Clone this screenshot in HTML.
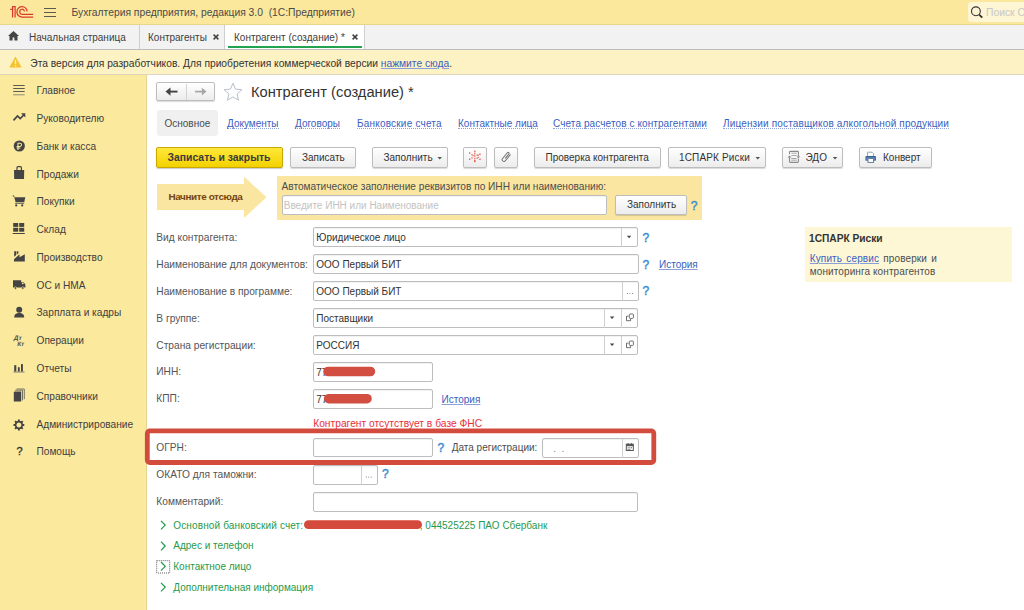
<!DOCTYPE html>
<html><head><meta charset="utf-8">
<style>
*{box-sizing:border-box;margin:0;padding:0}
html,body{width:1024px;height:610px;overflow:hidden;background:#fff;font-family:"Liberation Sans",sans-serif;font-size:10px;color:#333}
.a{position:absolute;white-space:nowrap}
#top{position:absolute;left:0;top:0;width:1024px;height:25px;background:#fbe89c;border-bottom:1px solid #e8d68a}
#tabs{position:absolute;left:0;top:25px;width:1024px;height:25px;background:#f2f2f2;border-bottom:1px solid #bdbdbd}
#warn{position:absolute;left:0;top:50px;width:1024px;height:25px;background:#fdf2c4;border-bottom:1px solid #dcd6c0}
#side{position:absolute;left:0;top:75px;width:147px;height:535px;background:#fbe99e;border-right:1px solid #e6d590}
.lnk{color:#3a60c0;text-decoration:underline;text-decoration-color:#8aa0d8}
.dl{color:#3a60c0;display:inline-block;line-height:11px;height:11px;border-bottom:1px dotted #8ea4dc}
.btn{position:absolute;height:20px;border:1px solid #bdbdbd;border-radius:2px;background:linear-gradient(#fff,#ececec);box-shadow:0 1px 1px rgba(0,0,0,.15);color:#333;text-align:center;line-height:18px;white-space:nowrap}
.inp{position:absolute;height:20px;border:1px solid #bdbdbd;border-radius:2px;background:#fff;box-shadow:inset 0 1px 1px rgba(0,0,0,.06);color:#333;line-height:19px;padding-left:2px;white-space:nowrap}
.lbl{position:absolute;left:156.3px;white-space:nowrap;color:#555;font-size:10.2px}
.q{position:absolute;color:#3b8bd0;font-weight:normal;font-size:12px;-webkit-text-stroke:0.45px #3b8bd0}
.grn{color:#1f9a4c}
</style></head><body>
<div id="top">
<svg class="a" style="left:0;top:0" width="40" height="24" viewBox="0 0 40 24">
<g fill="none" stroke="#dc3a2c" stroke-width="1.25">
<path d="M10.2 9.4 H12.6 M12.6 17.4 V6.7 H15.1 V17.4"/>
<path d="M27.1 11.6 A5.1 5.3 0 1 0 22.4 17.1 H33.2"/>
<path d="M24.5 11.4 A2.4 2.6 0 1 0 22.4 14.4 H33.2"/>
</g></svg>
<div class="a" style="left:44px;top:8px;width:12px;height:1.4px;background:#5a5a52"></div>
<div class="a" style="left:44px;top:12px;width:12px;height:1.4px;background:#5a5a52"></div>
<div class="a" style="left:44px;top:16px;width:12px;height:1.4px;background:#5a5a52"></div>
<div class="a" style="left:71.5px;top:7px;font-size:10.3px;color:#4a4a4a">Бухгалтерия предприятия, редакция 3.0&nbsp; (1С:Предприятие)</div>
<div class="a" style="left:968px;top:2px;width:60px;height:20px;background:#fdf5d3;border-radius:3px"></div>
<svg class="a" style="left:970px;top:5px" width="14" height="14" viewBox="0 0 14 14"><circle cx="5.9" cy="6.3" r="4.4" fill="none" stroke="#333" stroke-width="1.1"/><path d="M9.1 9.6 L12.3 12.6" stroke="#333" stroke-width="1.9"/></svg>
<div class="a" style="left:986px;top:7px;font-size:10.3px;color:#c8c8c8">Поиск Се</div>
</div>
<div id="tabs">
<svg class="a" style="left:8.3px;top:5.9px" width="11" height="10" viewBox="0 0 11 10"><path d="M5.5 0 L11 5 H9.5 V9.5 H6.4 V6.5 H4.6 V9.5 H1.5 V5 H0 Z" fill="#444"/></svg>
<div class="a" style="left:29px;top:7px;color:#404040">Начальная страница</div>
<div class="a" style="left:139px;top:0;width:1px;height:24px;background:#cfcfcf"></div>
<div class="a" style="left:148px;top:7px;color:#404040">Контрагенты</div>
<svg class="a" style="left:212.5px;top:9.3px" width="6" height="6" viewBox="0 0 6 6"><path d="M0.6 0.6 L5.4 5.4 M5.4 0.6 L0.6 5.4" stroke="#444" stroke-width="1.5"/></svg>
<div class="a" style="left:224px;top:0;width:1px;height:24px;background:#cfcfcf"></div>
<div class="a" style="left:225px;top:0;width:140px;height:24px;background:#fff;border-right:1px solid #cfcfcf"></div>
<div class="a" style="left:234px;top:7px;color:#404040">Контрагент (создание) *</div>
<svg class="a" style="left:352.3px;top:9.3px" width="6" height="6" viewBox="0 0 6 6"><path d="M0.6 0.6 L5.4 5.4 M5.4 0.6 L0.6 5.4" stroke="#444" stroke-width="1.5"/></svg>
<div class="a" style="left:228px;top:21px;width:134px;height:2px;background:#21a34f"></div>
</div>
<div id="warn">
<svg class="a" style="left:9px;top:6px" width="13" height="12" viewBox="0 0 13 12"><path d="M6.5 0.5 L12.7 11.5 H0.3 Z" fill="#f5c32c"/><rect x="5.8" y="4" width="1.4" height="4" fill="#fdf0c4"/><rect x="5.8" y="9" width="1.4" height="1.4" fill="#fdf0c4"/></svg>
<div class="a" style="left:30.3px;top:8px;color:#333;font-size:10.26px">Эта версия для разработчиков. Для приобретения коммерческой версии <span class="lnk">нажмите сюда</span>.</div>
</div>
<div id="side"></div>
<svg class="a" style="left:0;top:0" width="40" height="610" viewBox="0 0 40 610"><path d="M13.2 85.5h11.5M13.2 88.5h11.5M13.2 91.5h11.5" stroke="#5a5a55" stroke-width="1"/><path d="M13.2 94.8h11.5" stroke="#8f8b72" stroke-width="1"/><path d="M13.5 120.3 L17.5 116 L20.2 118.6 L23.8 115" fill="none" stroke="#444" stroke-width="1.7"/><path d="M21 113.2 H25.3 V117.5 Z" fill="#444"/><circle cx="19.3" cy="146" r="5.6" fill="#444"/><path d="M18 150 V143.3 H20 A1.55 1.55 0 0 1 20 146.4 H16.6 M16.6 148 H20.4" fill="none" stroke="#fbe99e" stroke-width="1.05"/><path d="M14 170 H24.2 L24 179 H14.2 Z" fill="#444"/><path d="M17 170.5 V167.6 Q17 166.6 18 166.6 H20.4 Q21.4 166.6 21.4 167.6 V170.5" fill="none" stroke="#444" stroke-width="1.2"/><path d="M12.8 195.6 L14.3 196.6" stroke="#444" stroke-width="1.1"/><path d="M14.2 197.2 H25.3 L24.3 202 H15.6 Z" fill="#444"/><path d="M15.2 203.2 H24.2" stroke="#444" stroke-width="1"/><circle cx="16.2" cy="205.4" r="1.1" fill="#444"/><circle cx="22.2" cy="205.4" r="1.1" fill="#444"/><rect x="13.2" y="223" width="5" height="3.9" fill="#444"/><rect x="19.2" y="223" width="5" height="3.9" fill="#444"/><rect x="13.2" y="227.8" width="5" height="3.9" fill="#444"/><rect x="19.2" y="227.8" width="5" height="3.9" fill="#444"/><rect x="12.7" y="233" width="12.1" height="1" fill="#444"/><path d="M14 261.6 V259.3 L19.5 254.3 V257.3 L24.8 254.3 V261.6 Z" fill="#444"/><path d="M14.2 251.2 H16 V255.2 L14.2 256.8 Z M16.6 251.2 H18.4 V253.3 L16.6 254.8 Z" fill="#444"/><path d="M13 280.2 H21.2 V287.4 H13 Z M21.2 282.2 H23.6 L25.4 284.4 V287.4 H21.2 Z" fill="#444"/><rect x="22" y="282.8" width="1.6" height="1.3" fill="#fbe99e"/><circle cx="15.5" cy="288" r="1.2" fill="#444" stroke="#fbe99e" stroke-width="0.6"/><circle cx="22.8" cy="288" r="1.2" fill="#444" stroke="#fbe99e" stroke-width="0.6"/><circle cx="19.2" cy="309.8" r="3" fill="#444"/><path d="M14.2 317.4 C14.2 314.2 16.5 313 19.2 313 C21.9 313 24.2 314.2 24.2 317.4 Z" fill="#444"/><g transform="translate(13.6 340) skewX(-12)"><text x="0" y="0" font-size="6.4" font-weight="bold" fill="#4a4a4a" font-family="Liberation Sans">Дт</text><text x="4.6" y="5.5" font-size="6.2" font-weight="bold" fill="#4a4a4a" font-family="Liberation Sans">Кт</text></g><rect x="14.2" y="365.2" width="2.1" height="6.4" fill="#444"/><rect x="17.9" y="367.2" width="1.8" height="4.4" fill="#444"/><rect x="21" y="364.1" width="1.9" height="7.5" fill="#444"/><path d="M13.4 372 H24.6" stroke="#777" stroke-width="0.9"/><path d="M13.8 392.6 Q13.8 391.5 14.9 391.5 H21.2 V401.6 H13.8 Z" fill="#444"/><path d="M15.2 390.2 H22.5 V400.4 M16.6 389 H24.3 V399.2" fill="none" stroke="#555" stroke-width="0.8"/><g transform="translate(18.9 425)"><circle r="3.3" fill="none" stroke="#444" stroke-width="1.7"/><path d="M3.20 0.00 L5.40 0.00 M2.26 2.26 L3.82 3.82 M0.00 3.20 L0.00 5.40 M-2.26 2.26 L-3.82 3.82 M-3.20 0.00 L-5.40 0.00 M-2.26 -2.26 L-3.82 -3.82 M-0.00 -3.20 L-0.00 -5.40 M2.26 -2.26 L3.82 -3.82" stroke="#444" stroke-width="1.9"/></g><text x="16.6" y="455.3" font-size="11" fill="#333" stroke="#333" stroke-width="0.35" font-family="Liberation Sans">?</text></svg>
<div class="a" style="left:36.5px;top:85.20px;line-height:12px;color:#404040;font-size:10.15px">Главное</div>
<div class="a" style="left:36.5px;top:112.98px;line-height:12px;color:#404040;font-size:10.15px">Руководителю</div>
<div class="a" style="left:36.5px;top:140.76px;line-height:12px;color:#404040;font-size:10.15px">Банк и касса</div>
<div class="a" style="left:36.5px;top:168.54px;line-height:12px;color:#404040;font-size:10.15px">Продажи</div>
<div class="a" style="left:36.5px;top:196.32px;line-height:12px;color:#404040;font-size:10.15px">Покупки</div>
<div class="a" style="left:36.5px;top:224.10px;line-height:12px;color:#404040;font-size:10.15px">Склад</div>
<div class="a" style="left:36.5px;top:251.88px;line-height:12px;color:#404040;font-size:10.15px">Производство</div>
<div class="a" style="left:36.5px;top:279.66px;line-height:12px;color:#404040;font-size:10.15px">ОС и НМА</div>
<div class="a" style="left:36.5px;top:307.44px;line-height:12px;color:#404040;font-size:10.15px">Зарплата и кадры</div>
<div class="a" style="left:36.5px;top:335.22px;line-height:12px;color:#404040;font-size:10.15px">Операции</div>
<div class="a" style="left:36.5px;top:363.00px;line-height:12px;color:#404040;font-size:10.15px">Отчеты</div>
<div class="a" style="left:36.5px;top:390.78px;line-height:12px;color:#404040;font-size:10.15px">Справочники</div>
<div class="a" style="left:36.5px;top:418.56px;line-height:12px;color:#404040;font-size:10.15px">Администрирование</div>
<div class="a" style="left:36.5px;top:446.34px;line-height:12px;color:#404040;font-size:10.15px">Помощь</div>

<!--MAIN-->
<div class="btn" style="left:156px;top:82px;width:58.5px;height:18.5px"></div>
<div class="a" style="left:186px;top:83.5px;width:1px;height:16px;background:#d4d4d4"></div>
<svg class="a" style="left:0;top:0" width="1024" height="610" viewBox="0 0 1024 610">
<path d="M169 91.6 H177.5" stroke="#444" stroke-width="1.9"/><path d="M165.5 91.6 L170.5 87.4 V95.8 Z" fill="#444"/>
<path d="M195 91.6 H203" stroke="#a6a6a6" stroke-width="1.7"/><path d="M206.5 91.6 L201.8 87.7 V95.5 Z" fill="#a6a6a6"/>
<path d="M233.00 83.20 L235.53 89.12 L241.94 89.70 L237.09 93.93 L238.53 100.20 L233.00 96.90 L227.47 100.20 L228.91 93.93 L224.06 89.70 L230.47 89.12 Z" fill="none" stroke="#b3bdc8" stroke-width="0.95" stroke-linejoin="round"/>
</svg>
<div class="a" style="left:251px;top:84px;font-size:14.7px;line-height:17px;color:#333">Контрагент (создание) *</div>
<div class="a" style="left:156.5px;top:109.5px;width:61px;height:26.5px;background:#f0f0f0;border-radius:3px"></div>
<div class="a" style="left:164.5px;top:118px;line-height:12px;color:#4d4d4d">Основное</div>
<div class="a" style="left:227px;top:118px;line-height:12px"><span class="dl">Документы</span></div>
<div class="a" style="left:295px;top:118px;line-height:12px"><span class="dl">Договоры</span></div>
<div class="a" style="left:357px;top:118px;line-height:12px"><span class="dl" style="letter-spacing:0.2px">Банковские счета</span></div>
<div class="a" style="left:458px;top:118px;line-height:12px"><span class="dl">Контактные лица</span></div>
<div class="a" style="left:553px;top:118px;line-height:12px"><span class="dl" style="letter-spacing:0.1px">Счета расчетов с контрагентами</span></div>
<div class="a" style="left:723px;top:118px;line-height:12px"><span class="dl" style="letter-spacing:0.15px">Лицензии поставщиков алкогольной продукции</span></div>
<!--BTNS-->
<div class="a" style="left:156px;top:147px;width:127px;height:20.5px;border:1px solid #c9a800;border-radius:2px;background:linear-gradient(#ffe83a,#f3d100);box-shadow:0 1px 1px rgba(0,0,0,.2)"></div>
<div class="a" style="left:167.5px;top:151.5px;font-size:10.4px;line-height:12px;font-weight:bold;color:#3a3a3a">Записать и закрыть</div>
<div class="btn" style="left:290px;top:147px;width:66px;height:20.5px"></div>
<div class="a" style="left:302px;top:151.5px;line-height:12px;color:#333">Записать</div>
<div class="btn" style="left:372px;top:147px;width:76px;height:20.5px"></div>
<div class="a" style="left:383.5px;top:151.5px;line-height:12px;color:#333">Заполнить</div>
<div class="btn" style="left:463px;top:147px;width:24px;height:20.5px"></div>
<div class="btn" style="left:494px;top:147px;width:24px;height:20.5px"></div>
<div class="btn" style="left:534px;top:147px;width:126.5px;height:20.5px"></div>
<div class="a" style="left:545.5px;top:151.5px;line-height:12px;color:#333">Проверка контрагента</div>
<div class="btn" style="left:667.5px;top:147px;width:98px;height:20.5px"></div>
<div class="a" style="left:679px;top:151.5px;line-height:12px;color:#333;letter-spacing:0.15px">1СПАРК Риски</div>
<div class="btn" style="left:782px;top:147px;width:60.5px;height:20.5px"></div>
<div class="a" style="left:805.5px;top:151.5px;line-height:12px;color:#333">ЭДО</div>
<div class="btn" style="left:859px;top:147px;width:72.5px;height:20.5px"></div>
<div class="a" style="left:883px;top:151.5px;line-height:12px;color:#333">Конверт</div>
<svg class="a" style="left:0;top:0" width="1024" height="610" viewBox="0 0 1024 610">
<path d="M437.5 157 H442 L439.75 159.5 Z M755.5 157 H760 L757.75 159.5 Z M832.8 157 H837.3 L835.05 159.5 Z" fill="#555"/>
<g fill="#e04a3a">
<rect x="474.2" y="150.6" width="1.3" height="1.3"/><rect x="474.2" y="152.6" width="1.2" height="1.2"/><rect x="474.2" y="154.5" width="1.2" height="1.2"/>
<rect x="474.2" y="158.2" width="1.2" height="1.2"/><rect x="474.2" y="160" width="1.2" height="1.2"/><rect x="474.2" y="160.9" width="1.3" height="1.3"/>
<rect x="474.3" y="156.3" width="1" height="1"/>
<rect x="469" y="152.4" width="1.3" height="1.3"/><rect x="471.4" y="154.2" width="1.2" height="1.2"/><rect x="472.6" y="155.2" width="1" height="1"/>
<rect x="479.3" y="153.6" width="1.3" height="1.3"/><rect x="476.6" y="154.6" width="1.2" height="1.2"/><rect x="477.8" y="154.6" width="1" height="1"/>
<rect x="469" y="158.6" width="1.3" height="1.3"/><rect x="471.4" y="157.3" width="1.2" height="1.2"/>
<rect x="479.3" y="158.6" width="1.3" height="1.3"/><rect x="476.6" y="157.6" width="1.2" height="1.2"/><rect x="477.8" y="156.8" width="1" height="1"/>
</g>
<path d="M-2 0.2 H3.6 A1 1 0 0 0 3.6 -1.8 H-3.8 A1.8 1.8 0 0 0 -3.8 1.8 H4.4" fill="none" stroke="#6a6a6a" stroke-width="0.95" transform="translate(506.4 156.7) rotate(-50)"/>
<g fill="none" stroke="#8a8a8a" stroke-width="1.1"><path d="M789.5 154.3 V152.2 Q789.5 151.4 790.3 151.4 H797.6 Q798.4 151.4 798.4 152.2 V156.3"/><path d="M798.4 158.6 V161.6 Q798.4 162.4 797.6 162.4 H790.3 Q789.5 162.4 789.5 161.6 V157.2"/></g>
<path d="M787.5 157.4 L789.5 155.6 L791.5 157.4 Z M796.6 156.3 L798.4 158.2 L800.2 156.3 Z" fill="#888"/>
<path d="M791.3 153.2 H796.7 M791.3 155.5 H796.7 M791.3 158.5 H796.7 M791.3 160.2 H796.7" stroke="#a0a0a0" stroke-width="0.9"/>
<path d="M867.6 156.5 V152.2 H872 L873.5 153.7 V156.5" fill="#fff" stroke="#8f9bb0" stroke-width="0.9"/>
<rect x="865.4" y="155.9" width="10.6" height="4.8" rx="0.8" fill="#3f6b9c"/>
<rect x="866.5" y="157" width="8.4" height="2.6" fill="#6e95c2"/>
<path d="M866.5 156.9 H875" stroke="#2f5a8a" stroke-width="1"/>
<rect x="868" y="158.6" width="5.6" height="3.8" fill="#fff" stroke="#5f7392" stroke-width="0.9"/>
</svg>
<!--AUTOFILL-->
<div class="a" style="left:156.5px;top:184.4px;width:88px;height:25.7px;background:#fae6a0"></div>
<svg class="a" style="left:0;top:0" width="1024" height="610" viewBox="0 0 1024 610"><path d="M244 176.6 L266.5 197.3 L244 218 Z" fill="#fae6a0"/></svg>
<div class="a" style="left:168.5px;top:191.4px;font-size:9.9px;line-height:11px;font-weight:bold;color:#74430f;letter-spacing:-0.38px">Начните отсюда</div>
<div class="a" style="left:277px;top:175.5px;width:424.5px;height:44.2px;background:#fae6a0"></div>
<div class="a" style="left:281.5px;top:180.5px;font-size:10.15px;line-height:12px;color:#4d4d4d">Автоматическое заполнение реквизитов по ИНН или наименованию:</div>
<div class="inp" style="left:281.5px;top:195.3px;width:325.5px;height:19.3px"></div>
<div class="a" style="left:283.75px;top:199.5px;line-height:12px;color:#c3c3c3">Введите ИНН или Наименование</div>
<div class="btn" style="left:615px;top:194.7px;width:71.5px;height:20.6px"></div>
<div class="a" style="left:627px;top:199px;line-height:12px;color:#333">Заполнить</div>
<div class="q" style="left:690.8px;top:199.7px;line-height:12px">?</div>
<!--FORM-->
<div class="lbl" style="top:231.6px;line-height:12px">Вид контрагента:</div>
<div class="lbl" style="top:258.6px;line-height:12px">Наименование для документов:</div>
<div class="lbl" style="top:285.5px;line-height:12px">Наименование в программе:</div>
<div class="lbl" style="top:312.5px;line-height:12px">В группе:</div>
<div class="lbl" style="top:339.5px;line-height:12px">Страна регистрации:</div>
<div class="lbl" style="top:366.3px;line-height:12px">ИНН:</div>
<div class="lbl" style="top:393.2px;line-height:12px">КПП:</div>
<div class="lbl" style="top:441.5px;line-height:12px">ОГРН:</div>
<div class="lbl" style="top:468.6px;line-height:12px">ОКАТО для таможни:</div>
<div class="lbl" style="top:495.5px;line-height:12px">Комментарий:</div>
<div class="inp" style="left:313.3px;top:227.3px;width:325.0px;height:19.5px">Юридическое лицо</div>
<div class="inp" style="left:313.3px;top:254.3px;width:326.0px;height:19.5px">ООО Первый БИТ</div>
<div class="inp" style="left:313.3px;top:281.0px;width:326.0px;height:19.5px">ООО Первый БИТ</div>
<div class="inp" style="left:313.3px;top:308.0px;width:325.0px;height:19.5px">Поставщики</div>
<div class="inp" style="left:313.3px;top:335.0px;width:325.0px;height:19.5px">РОССИЯ</div>
<div class="inp" style="left:313.3px;top:362.3px;width:120.0px;height:19.5px">77</div>
<div class="inp" style="left:313.3px;top:389.2px;width:120.0px;height:19.5px">77</div>
<div class="inp" style="left:313.3px;top:437.9px;width:120.0px;height:19.5px"></div>
<div class="inp" style="left:541.8px;top:438.2px;width:96.8px;height:19.5px"><span style="color:#888;letter-spacing:0">&nbsp;&nbsp;&nbsp;.&nbsp;&nbsp;.</span></div>
<div class="inp" style="left:313.3px;top:465.2px;width:65.0px;height:19.5px"></div>
<div class="inp" style="left:313.3px;top:492.2px;width:325.0px;height:19.5px"></div>
<div class="a" style="left:621.4px;top:227.8px;width:1px;height:19.5px;background:#cfcfcf"></div>
<div class="a" style="left:621.5px;top:281.5px;width:1px;height:19.5px;background:#cfcfcf"></div>
<div class="a" style="left:604.4px;top:308.5px;width:1px;height:19.5px;background:#cfcfcf"></div>
<div class="a" style="left:621.4px;top:308.5px;width:1px;height:19.5px;background:#cfcfcf"></div>
<div class="a" style="left:604.4px;top:335.5px;width:1px;height:19.5px;background:#cfcfcf"></div>
<div class="a" style="left:621.4px;top:335.5px;width:1px;height:19.5px;background:#cfcfcf"></div>
<div class="a" style="left:621.9px;top:438.7px;width:1px;height:19.5px;background:#cfcfcf"></div>
<div class="a" style="left:360.5px;top:465.7px;width:1px;height:19.5px;background:#cfcfcf"></div>
<div class="q" style="left:642.6px;top:231.6px;line-height:12px">?</div>
<div class="q" style="left:642.6px;top:258.6px;line-height:12px">?</div>
<div class="q" style="left:642.6px;top:285.3px;line-height:12px">?</div>
<div class="q" style="left:437.4px;top:442.2px;line-height:12px">?</div>
<div class="q" style="left:382.1px;top:468px;line-height:12px">?</div>
<div class="a" style="left:659px;top:259.1px;line-height:12px"><span class="lnk">История</span></div>
<div class="a" style="left:441.6px;top:394.1px;line-height:12px"><span class="lnk">История</span></div>
<div class="a" style="left:313.2px;top:418.1px;line-height:12px;color:#e8303a;font-size:10.25px">Контрагент отсутствует в базе ФНС</div>
<div class="a" style="left:451.7px;top:441.5px;line-height:12px;color:#4d4d4d">Дата регистрации:</div>
<svg class="a" style="left:0;top:0" width="1024" height="610" viewBox="0 0 1024 610"><g fill="#444"><path d="M626.9 235.8 h4.4 l-2.2 2.4 z"/><path d="M609.9 316.5 h4.4 l-2.2 2.4 z"/><path d="M609.9 343.5 h4.4 l-2.2 2.4 z"/></g><g fill="none" stroke="#555" stroke-width="0.85"><path d="M628.4 316.2 H626.5 V320.7 H630.6 V319.0"/><rect x="629.3" y="314.0" width="4.1" height="4.4" rx="0.9"/><path d="M628.4 343.2 H626.5 V347.7 H630.6 V346.0"/><rect x="629.3" y="341.0" width="4.1" height="4.4" rx="0.9"/></g><g fill="#666"><circle cx="627.4" cy="293.5" r="0.5"/><circle cx="629.9" cy="293.5" r="0.5"/><circle cx="632.5" cy="293.5" r="0.5"/><circle cx="366.3" cy="477" r="0.5"/><circle cx="368.7" cy="477" r="0.5"/><circle cx="371.2" cy="477" r="0.5"/></g><g transform="translate(626.3 443)"><rect x="0" y="1.2" width="7" height="6.3" fill="none" stroke="#555" stroke-width="1"/><rect x="0" y="1.2" width="7" height="2" fill="#555"/><path d="M1.8 0 v2 M5.2 0 v2" stroke="#555" stroke-width="0.9"/><g fill="#555"><rect x="1.3" y="4.3" width="1" height="1"/><rect x="3" y="4.3" width="1" height="1"/><rect x="4.7" y="4.3" width="1" height="1"/><rect x="1.3" y="5.9" width="1" height="1"/><rect x="3" y="5.9" width="1" height="1"/></g></g><path d="M328 371.5 H370.4" stroke="#d24e40" stroke-width="9.6" stroke-linecap="round"/><path d="M328.7 398.7 H367" stroke="#d24e40" stroke-width="9.6" stroke-linecap="round"/><path d="M308.4 524.7 H417.6" stroke="#d44a3c" stroke-width="8.8" stroke-linecap="round"/><rect x="147.3" y="430.9" width="506.5" height="31.6" rx="2.5" fill="none" stroke="#d24b3d" stroke-width="4.8"/></svg>
<div class="a" style="left:805px;top:227px;width:206.5px;height:55px;background:#fef7d6"></div>
<div class="a" style="left:809px;top:232.9px;line-height:12px;font-weight:bold;font-size:10.2px;color:#333">1СПАРК Риски</div>
<div class="a" style="left:809.8px;top:252.5px;line-height:12px;color:#4d4d4d;letter-spacing:0.12px;word-spacing:1.3px"><span class="lnk">Купить сервис</span> проверки и</div>
<div class="a" style="left:809.8px;top:266.2px;line-height:12px;color:#4d4d4d;letter-spacing:0.1px">мониторинга контрагентов</div>
<div class="a grn" style="left:173.3px;top:519.5px;line-height:12px;letter-spacing:0.14px">Основной банковский счет:</div>
<div class="a grn" style="left:173.3px;top:540.4px;line-height:12px">Адрес и телефон</div>
<div class="a grn" style="left:173.3px;top:560.7px;line-height:12px">Контактное лицо</div>
<div class="a grn" style="left:173.3px;top:581.5px;line-height:12px">Дополнительная информация</div>
<svg class="a" style="left:0;top:0" width="1024" height="610" viewBox="0 0 1024 610"><g fill="none" stroke="#1e9a4b" stroke-width="1.2"><path d="M161 520.8 L165.2 525.1 L161 529.4"/><path d="M161 541.7 L165.2 546.0 L161 550.3"/><path d="M161 562.0 L165.2 566.3 L161 570.6"/><path d="M161 582.8 L165.2 587.1 L161 591.4"/></g><rect x="156.7" y="560.7" width="13" height="12.3" fill="none" stroke="#333" stroke-width="0.8" stroke-dasharray="1 1"/></svg>
<div class="a grn" style="left:419.8px;top:519.5px;line-height:12px">, 044525225 ПАО Сбербанк</div>
</body></html>
